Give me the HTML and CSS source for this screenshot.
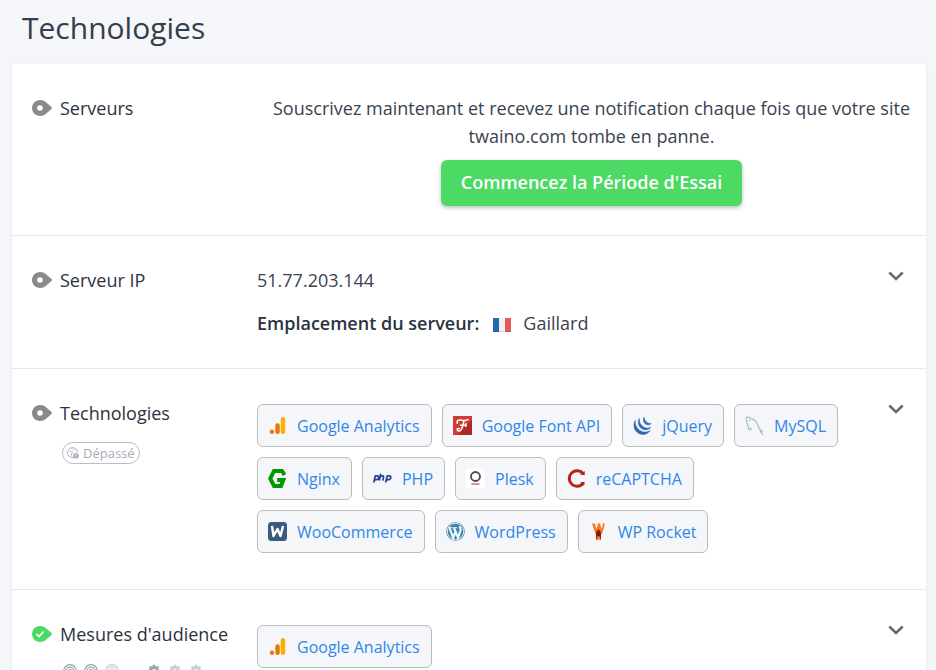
FILE: index.html
```html
<!DOCTYPE html>
<html lang="fr">
<head>
  <meta charset="UTF-8" />
  <meta name="viewport" content="width=device-width, initial-scale=1" />
  <title>Technologies</title>
  <link rel="stylesheet" href="styles.css">
</head>
<body>
  <!-- Shared icons -->
  <svg class="sprite" aria-hidden="true">
    <symbol id="icon-neutral" viewBox="0 0 20 16">
      <path fill="#8a8a8a" fill-rule="evenodd" d="M8 0C3.600 0 0 3.600 0 8s3.600 8 8 8c2.500 0 4.300-.8 6-2.200l5.200-4.600c.9-.8.9-1.600 0-2.400L14 2.200C12.300.8 10.500 0 8 0zm0 5.200a2.800 2.800 0 1 1 0 5.600 2.800 2.800 0 0 1 0-5.600z" />
    </symbol>
    <symbol id="icon-pass" viewBox="0 0 20 16">
      <path fill="#4cd964" d="M8 0C3.600 0 0 3.600 0 8s3.600 8 8 8c2.500 0 4.300-.8 6-2.200l5.200-4.600c.9-.8.9-1.600 0-2.400L14 2.200C12.300.8 10.500 0 8 0z" />
      <path fill="none" stroke="#fff" stroke-width="1.600" d="M4.500 8l2.500 2.500 4.700-5" />
    </symbol>
    <symbol id="icon-chevron" viewBox="0 0 16 10">
      <path fill="none" stroke="#646b7a" stroke-width="2.600" d="M1.300 1.500L8 8l6.700-6.500" />
    </symbol>
    <symbol id="icon-analytics" viewBox="0 0 19 19">
      <rect x="12.700" y="1" width="4.500" height="17" rx="2.200" fill="#fbb000" />
      <rect x="7.300" y="7.300" width="4.500" height="10.700" rx="2.200" fill="#e8780a" />
      <circle cx="4" cy="15.800" r="2.200" fill="#e8780a" />
    </symbol>
    <symbol id="icon-target" viewBox="0 0 14 14">
      <g fill="none" stroke="currentColor" stroke-width="1.200">
        <circle cx="7" cy="7" r="6.300" />
        <circle cx="7" cy="7" r="3.900" />
        <circle cx="7" cy="7" r="1.500" />
      </g>
    </symbol>
    <symbol id="icon-gear" viewBox="0 0 14 14">
      <circle cx="7" cy="7" r="3.600" fill="none" stroke="currentColor" stroke-width="3" />
      <path stroke="currentColor" stroke-width="2.400" d="M7 .8v2M7 11.200v2M.8 7h2M11.200 7h2M2.600 2.600L4 4M10 10l1.400 1.400M11.400 2.600L10 4M4 10l-1.400 1.400" />
    </symbol>
  </svg>

  <h1 class="page-title">Technologies</h1>

  <main class="card">
    <!-- Server monitoring -->
    <section class="row">
      <div class="row-label">
        <h2><svg class="status"><use href="#icon-neutral" /></svg>Serveurs</h2>
      </div>
      <div class="row-promo">
        <p>Souscrivez maintenant et recevez une notification chaque fois que votre site twaino.com tombe en panne.</p>
        <button type="button" class="btn-trial">Commencez la Période d'Essai</button>
      </div>
    </section>

    <!-- Server IP -->
    <section class="row">
      <div class="row-label">
        <h2><svg class="status"><use href="#icon-neutral" /></svg>Serveur IP</h2>
      </div>
      <div class="row-body">
        <p>51.77.203.144</p>
        <p class="location">
          <strong>Emplacement du serveur:</strong>
          <svg class="flag" viewBox="0 0 18 14">
            <rect width="6" height="14" fill="#2668a8" />
            <rect x="6" width="6" height="14" fill="#f0f0f3" />
            <rect x="12" width="6" height="14" fill="#e45a55" />
            <path fill="#000" fill-opacity=".12" d="M0 13h18v1H0z" />
          </svg>
          <span>Gaillard</span>
        </p>
      </div>
      <button type="button" class="toggle" aria-label="Serveur IP"><svg><use href="#icon-chevron" /></svg></button>
    </section>

    <!-- Detected technologies -->
    <section class="row">
      <div class="row-label">
        <h2><svg class="status"><use href="#icon-neutral" /></svg>Technologies</h2>
        <span class="badge">
          <svg viewBox="0 0 12 12">
            <path fill="none" stroke="currentColor" d="M7 10.300A4.900 4.900 0 1 1 10.400 5.500M4.500 8.500V6.500l2-1.500M3 4.500h1.500M6 2.500v1" />
            <circle cx="9" cy="8.800" r="2.800" fill="currentColor" />
            <path stroke="#fff" d="M9 7v2M9 9.600v.8" />
          </svg>
          Dépassé
        </span>
      </div>
      <div class="row-body chips">
        <a class="chip" href="#"><svg><use href="#icon-analytics" /></svg>Google Analytics</a>
        <a class="chip" href="#">
          <svg viewBox="0 0 19 19">
            <path fill="#d03c34" d="M0 0h19v19H0z" />
            <path fill="#ab2a25" d="M19 4v15H5l7-8z" />
            <path fill="none" stroke="#fff" stroke-width="1.500" stroke-linecap="round" d="M4.300 7.300C3.300 4 6.500 3.600 9 4.200c2.500.5 4.300.7 6-.7M11.200 4.500c-1.200 3.500-1.700 8-3.500 9.700-1.200 1.200-3.400.8-3.600-.5-.1-1 1.100-1.600 2.200-1.100M7.500 9.200h5.700M13 7.700v2.800" />
          </svg>Google Font API</a>
        <a class="chip" href="#">
          <svg viewBox="0 0 19 19" fill="#2f66b3" stroke="#2f66b3" stroke-width=".6">
            <path d="M2.300 4.500C-.8 9.500 1.700 17 8.300 18.300c3.700.6 6.700-.7 8.700-3.600-2.600 1.700-6.300 2-9.500.2C3.700 12.700 1.600 8.600 2.300 4.500z" />
            <path d="M6.300 2.500c-2 3.700-.7 8.900 3.600 10.700 2.700 1.100 5.600.7 7.900-1.700-2.500 1-5.300.9-7.700-.8C7.300 8.700 5.900 5.800 6.300 2.500z" />
            <path d="M11 1.200c-1.200 2.700-.3 6.200 2.600 7.300 1.600.6 3.400.2 4.600-1-1.500.2-3.200 0-4.500-1.200C12.100 4.900 11.200 3.200 11 1.200z" />
          </svg>jQuery</a>
        <a class="chip" href="#">
          <svg viewBox="0 0 19 19">
            <path fill="none" stroke="#a5bccb" stroke-width="1.200" stroke-linejoin="round" d="M4 14c-.8-1.700-.3-3.400-1.300-5.300C1.700 6.500.9 4 1.200 1.300c2.300-.5 4 .3 5.300 1.600 3.200.4 5 3 6.200 6.100.8 2.400 1.500 4.800 4.600 6.200l-2 .4c.7 1 1.900 1.500 2.600 3M4 14l1.500-2 1.300 2.200" />
            <circle cx="5" cy="4.500" r=".7" fill="#8fabbc" />
            <path fill="#a5bccb" d="M14 14.500l4 1-2.500.7z" />
          </svg>MySQL</a>
        <a class="chip" href="#">
          <svg viewBox="0 0 19 19">
            <path fill="none" stroke="#090" stroke-width="4" d="M16.500 6L14 2H6L2.200 9.500 6 17h7l2.300-6H9.200" />
          </svg>Nginx</a>
        <a class="chip" href="#">
          <svg viewBox="0 0 19 19">
            <g fill="none" stroke="#293f94" stroke-width="1.700" stroke-linejoin="round">
              <path d="M.8 13.500L2.300 6.800h1.900c1.700 0 1.700 1.200 1.300 2.400-.4 1.300-1.300 1.600-3.700 1.600M7.800 4.800l-1.500 6.800M7.300 7.500c1.600-.8 3.700-1 3.300.8l-.8 3.300M12.700 13.500l1.600-6.700h1.900c1.700 0 1.800 1.200 1.400 2.400-.4 1.300-1.300 1.600-3.900 1.600" />
            </g>
          </svg>PHP</a>
        <a class="chip" href="#">
          <svg viewBox="0 0 19 19">
            <path fill="#fff" d="M0 0h19v19H0z" />
            <circle cx="9.500" cy="7.500" r="4.500" fill="none" stroke="#4b4b50" stroke-width="1.800" />
            <path stroke="#d98592" stroke-width="1.800" d="M5.300 15h8.400" />
          </svg>Plesk</a>
        <a class="chip" href="#">
          <svg viewBox="0 0 19 19">
            <path fill="none" stroke="#b82217" stroke-width="3" d="M16.300 4.800A7.800 7.800 0 1 0 16.300 14.200" />
            <path fill="#b82217" d="M13 5.600l4.700-3.600v4.200zM13.500 13h4v2.500l-2 1.200z" />
          </svg>reCAPTCHA</a>
        <a class="chip" href="#">
          <svg viewBox="0 0 19 19">
            <rect width="19" height="19" rx="3.500" fill="#3c5a80" />
            <path fill="none" stroke="#fff" stroke-width="2.400" stroke-linejoin="round" d="M4 4l1.500 10L9.500 7l3 7L15 4" />
          </svg>WooCommerce</a>
        <a class="chip" href="#">
          <svg viewBox="0 0 19 19">
            <circle cx="9.500" cy="9.500" r="9.300" fill="#3c87a8" />
            <circle cx="9.500" cy="9.500" r="8.200" fill="none" stroke="#e3eef4" />
            <path fill="none" stroke="#f4f8fb" stroke-width="2.200" d="M3.500 5.800l3.700 10L10 8.500M8 5.800l4 10 2.500-7.300c.6-2-.8-2.700-.8-4.200" />
            <path stroke="#f4f8fb" d="M2 5.700h4.500M7 5.700h4" />
          </svg>WordPress</a>
        <a class="chip" href="#">
          <svg viewBox="0 0 19 19">
            <path fill="#f67b22" d="M3 1.500h3l1.400 5.700L9 1.500h2l1.600 5.700L14 1.500h2L13 12h-2L9.500 7.800 8 12H6.500z" />
            <path fill="#7d1d0c" d="M7 12.500c0-3 1.300-4 2.500-5 1.200 1 2.500 2 2.500 5V18H7z" />
            <path fill="#f05a22" d="M8.200 14h2.600L12 18H7z" />
            <path fill="#fdd15b" d="M8.800 16h1.500v2H8.800z" />
          </svg>WP Rocket</a>
      </div>
      <button type="button" class="toggle" aria-label="Technologies"><svg><use href="#icon-chevron" /></svg></button>
    </section>

    <!-- Audience measurement -->
    <section class="row">
      <div class="row-label">
        <h2><svg class="status"><use href="#icon-pass" /></svg>Mesures d'audience</h2>
        <div class="scores">
          <div class="score">
            <svg><use href="#icon-target" /></svg>
            <svg><use href="#icon-target" /></svg>
            <svg class="off"><use href="#icon-target" /></svg>
          </div>
          <div class="score">
            <svg><use href="#icon-gear" /></svg>
            <svg class="off"><use href="#icon-gear" /></svg>
            <svg class="off"><use href="#icon-gear" /></svg>
          </div>
        </div>
      </div>
      <div class="row-body chips">
        <a class="chip" href="#"><svg><use href="#icon-analytics" /></svg>Google Analytics</a>
      </div>
      <button type="button" class="toggle" aria-label="Mesures d'audience"><svg><use href="#icon-chevron" /></svg></button>
    </section>
  </main>
</body>
</html>
```
FILE: styles.css
```css
* {
  box-sizing: border-box;
}
body {
  margin: 0;
  padding: 0 10px 30px 12px;
  background: #f5f6fa;
  color: #2b3340;
  font-family: "Open Sans", "Noto Sans", sans-serif;
  font-size: 18px;
  font-weight: 400;
  line-height: 28px;
}
h1, h2, p {
  margin: 0;
}
.sprite {
  display: none;
}
.page-title {
  padding: 8px 10px 16px;
  color: #363d4a;
  font-size: 30px;
  font-weight: 400;
  line-height: 40px;
}

/* White card with one row per check */
.card {
  background: #fff;
  border-radius: 3px;
  box-shadow: 0 1px 3px rgba(50, 60, 90, 0.1);
}
.row {
  display: flex;
  padding: 30px 0 29px;
  border-bottom: 1px solid #e8e9ec;
}
.row:last-child {
  border-bottom: none;
}
.row-label {
  flex: none;
  width: 245px;
  padding-left: 20px;
}
.row-label h2 {
  display: flex;
  align-items: center;
  gap: 8px;
  font-size: 18px;
  font-weight: 400;
}
.status {
  width: 20px;
  height: 16px;
}
.row-body {
  flex: 1;
  padding-bottom: 2px;
  color: #3b4250;
}

/* Trial offer */
.row-promo {
  flex: 1;
  padding: 0 15px;
  color: #3b4250;
  text-align: center;
}
.btn-trial {
  height: 46px;
  margin-top: 10px;
  padding: 0 20px 2px;
  border: none;
  border-radius: 6px;
  background: #4cd964;
  box-shadow: 0 2px 4px rgba(0, 0, 0, 0.25);
  color: #fff;
  font: 600 18px/28px "Open Sans", sans-serif;
  vertical-align: top;
  cursor: pointer;
}

/* Server location */
.location {
  display: flex;
  align-items: center;
  margin-top: 15px;
}
.location strong {
  color: #2b3340;
  font-weight: 600;
}
.flag {
  width: 18px;
  height: 14px;
  margin: 4px 12px 0 14px;
}

/* Expand button */
.toggle {
  flex: none;
  align-self: flex-start;
  width: 60px;
  padding: 5px 0;
  border: none;
  background: none;
  line-height: 0;
  cursor: pointer;
}
.toggle svg {
  width: 16px;
  height: 10px;
}

/* Outdated badge */
.badge {
  display: inline-flex;
  align-items: center;
  gap: 4px;
  height: 22px;
  margin: 15px 0 0 30px;
  padding: 0 4px;
  border: 1px solid #bdbdbd;
  border-radius: 11px;
  color: #a3abb9;
  font-size: 13px;
}
.badge svg {
  width: 12px;
  height: 12px;
}

/* Technology links */
.chips {
  display: flex;
  flex-wrap: wrap;
  align-content: flex-start;
  gap: 10px;
  padding: 5px 0 7px;
}
.chip {
  display: flex;
  align-items: center;
  gap: 10px;
  height: 43px;
  padding: 0 11px 0 10px;
  border: 1px solid #bdbdbd;
  border-radius: 6px;
  background: #f5f6fa;
  color: #3086e8;
  font-size: 16px;
  text-decoration: none;
}
.chip svg {
  width: 19px;
  height: 19px;
}
.chip:hover {
  text-decoration: underline;
}

/* Impact and effort */
.scores {
  display: flex;
  gap: 28px;
  margin: 16px 0 0 31px;
}
.score {
  display: flex;
  gap: 7px;
  color: #9aa2b1;
}
.score svg {
  width: 14px;
  height: 14px;
}
.score .off {
  color: #c9cdd6;
}
```
